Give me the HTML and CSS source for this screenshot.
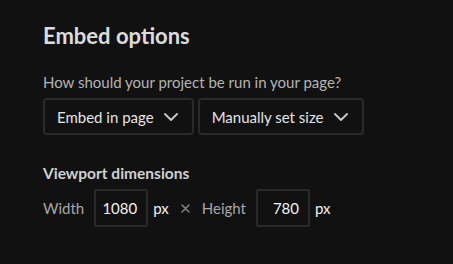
FILE: index.html
```html
<!DOCTYPE html>
<html>
<head>
<meta charset="utf-8">
<link rel="stylesheet" href="styles.css">
</head>
<body>
<div class="panel">
  <h1 class="title">Embed options</h1>
  <p class="question">How should your project be run in your page?</p>
  <div class="selects">
    <div class="select">
      <span>Embed in page</span>
      <svg class="chev" width="14" height="8" viewBox="0 0 14 8"><path d="M1 1l6 6 6-6" fill="none" stroke="#c8c8c8" stroke-width="1.8" stroke-linecap="round" stroke-linejoin="round"/></svg>
    </div>
    <div class="select">
      <span>Manually set size</span>
      <svg class="chev" width="14" height="8" viewBox="0 0 14 8"><path d="M1 1l6 6 6-6" fill="none" stroke="#c8c8c8" stroke-width="1.8" stroke-linecap="round" stroke-linejoin="round"/></svg>
    </div>
  </div>
  <h2 class="subtitle">Viewport dimensions</h2>
  <div class="dims">
    <span class="label">Width</span>
    <div class="num">1080</div>
    <span class="unit">px</span>
    <svg class="times" width="9" height="9" viewBox="0 0 9 9" aria-label="×"><path d="M1 1l7 7M8 1l-7 7" fill="none" stroke="#808080" stroke-width="1.5" stroke-linecap="round"/></svg>
    <span class="label">Height</span>
    <div class="num">780</div>
    <span class="unit">px</span>
  </div>
</div>
</body>
</html>
```
FILE: styles.css
```css
html, body {
  margin: 0;
  padding: 0;
  background: #111111;
  height: 100%;
}
body {
  font-family: Lato, "Open Sans", sans-serif;
  color: #e6e6e6;
}
.panel {
  padding: 23px 0 0 43px;
}
.title {
  margin: 0;
  font-size: 22px;
  font-weight: 700;
  line-height: 26px;
  color: #dcdcdc;
}
.question {
  margin: 24px 0 0;
  font-size: 15px;
  line-height: 18px;
  color: #b4b4b4;
}
.selects {
  display: flex;
  gap: 4px;
  margin-top: 7px;
}
.select {
  display: flex;
  align-items: center;
  height: 37px;
  box-sizing: border-box;
  padding: 0 14px 0 12px;
  border: 2px solid #2a2a2a;
  border-radius: 4px;
  font-size: 15px;
  color: #e4e4e4;
}
.select .chev {
  margin-left: 10px;
}
.subtitle {
  margin: 29px 0 0;
  font-size: 15.5px;
  font-weight: 700;
  line-height: 18px;
  color: #d0d0d0;
}
.dims {
  display: flex;
  align-items: center;
  margin-top: 7px;
  font-size: 15px;
}
.label {
  color: #a6a6a6;
  margin-right: 10px;
}
.num {
  width: 54px;
  height: 38px;
  box-sizing: border-box;
  border: 2px solid #2a2a2a;
  border-radius: 2px;
  display: flex;
  align-items: center;
  justify-content: flex-end;
  padding-right: 9px;
  color: #f2f2f2;
}
.unit {
  margin-left: 5px;
  color: #f0f0f0;
}
.times {
  margin: 1px 12px 0;
}
```
